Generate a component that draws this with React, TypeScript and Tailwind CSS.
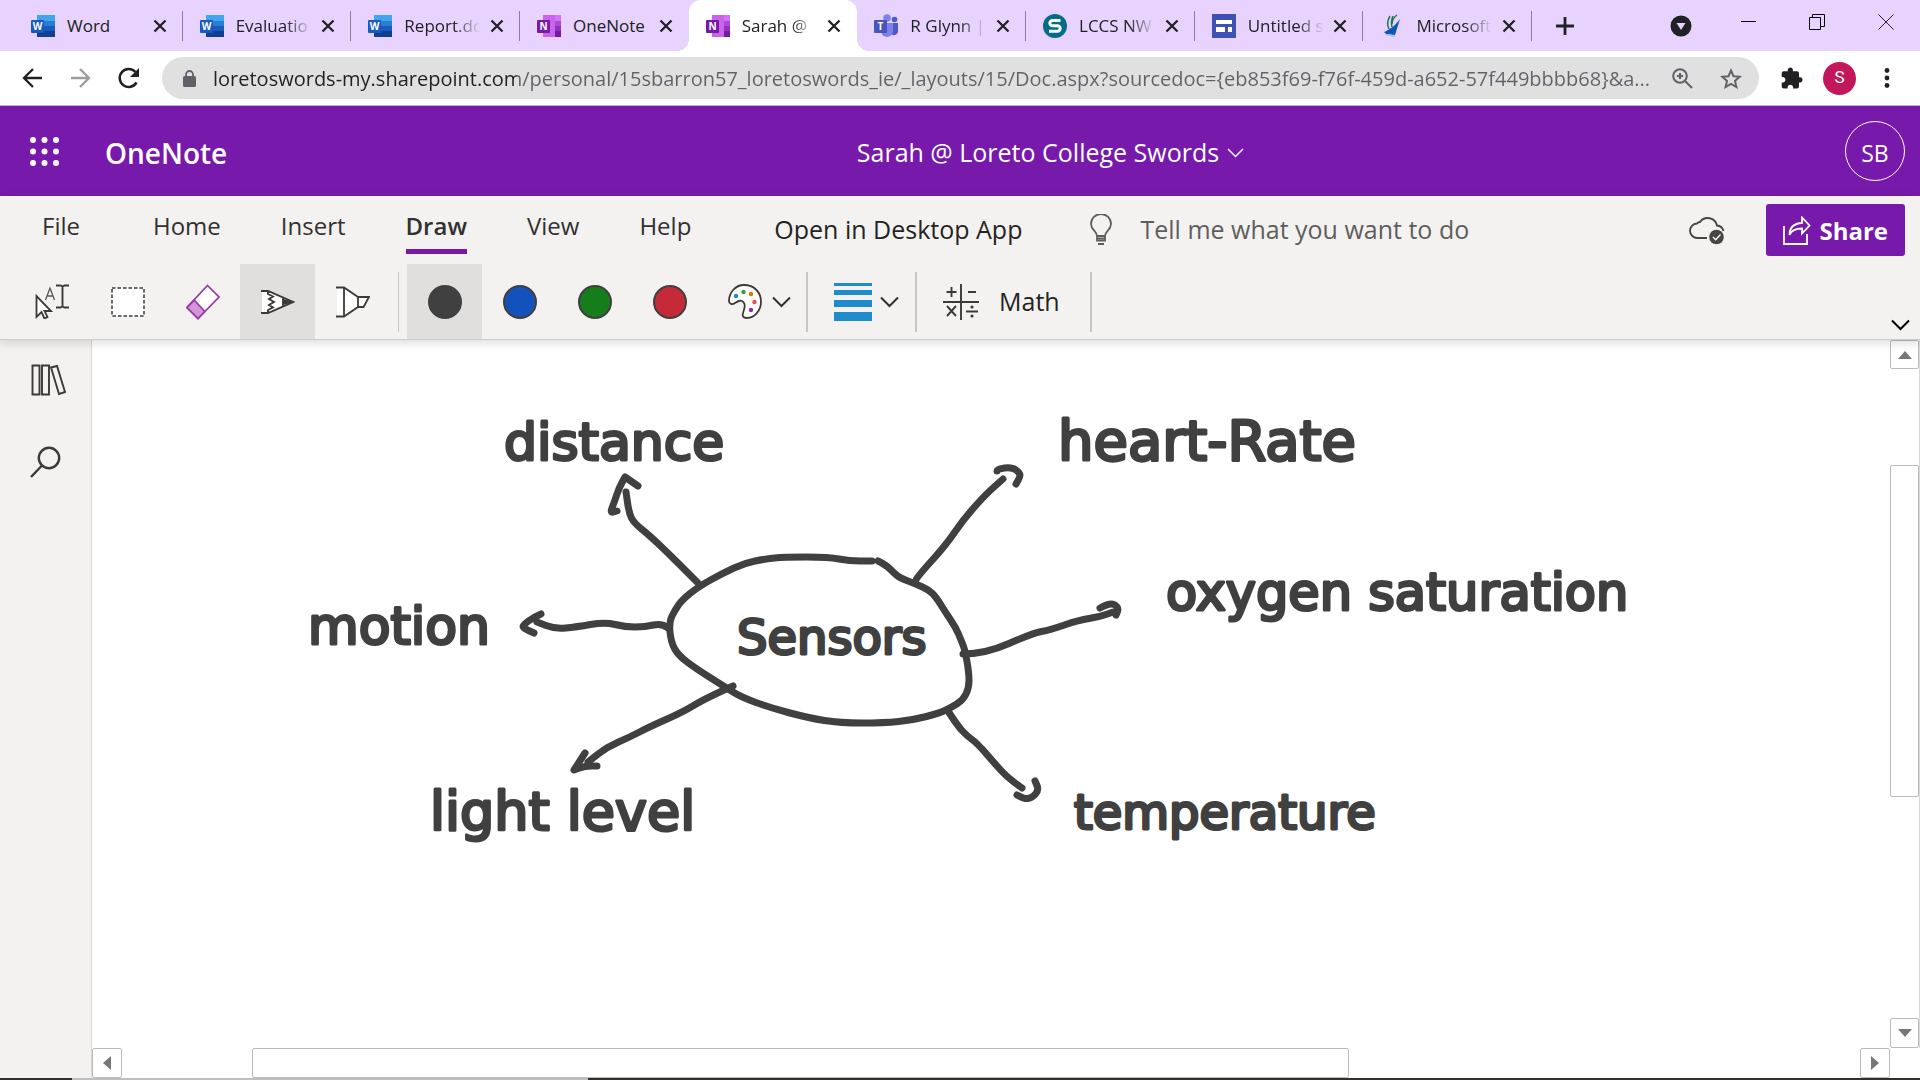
import React from "react";

type IconProps = { className?: string };

const WordIcon = () => (
  <svg width="24" height="24" viewBox="0 0 24 24" aria-hidden="true">
    <rect x="6" y="1" width="18" height="6" fill="#41a5ee" />
    <rect x="6" y="7" width="18" height="5" fill="#2b7cd3" />
    <rect x="6" y="12" width="18" height="5" fill="#185abd" />
    <rect x="6" y="17" width="18" height="6" fill="#103f91" />
    <rect x="0" y="6" width="13" height="13" rx="1" fill="#185abd" />
    <text x="6.5" y="16" textAnchor="middle" fontSize="10" fontWeight="700" fill="#fff" fontFamily="Open Sans, sans-serif">W</text>
  </svg>
);

const OneNoteIcon = () => (
  <svg width="24" height="24" viewBox="0 0 24 24" aria-hidden="true">
    <rect x="6" y="1" width="18" height="22" fill="#ca64ea" />
    <rect x="18" y="1" width="6" height="6" fill="#d373fc" />
    <rect x="18" y="7" width="6" height="5" fill="#ae4bd5" />
    <rect x="18" y="12" width="6" height="5" fill="#9332bf" />
    <rect x="18" y="17" width="6" height="6" fill="#7719aa" />
    <rect x="0" y="6" width="13" height="13" rx="1" fill="#7719aa" />
    <text x="6.5" y="16" textAnchor="middle" fontSize="10" fontWeight="700" fill="#fff" fontFamily="Open Sans, sans-serif">N</text>
  </svg>
);

const TeamsIcon = () => (
  <svg width="24" height="24" viewBox="0 0 24 24" aria-hidden="true">
    <circle cx="20.5" cy="5.5" r="2.8" fill="#5059c9" />
    <path d="M16 9h8v7a4 4 0 0 1-8 2z" fill="#5059c9" />
    <circle cx="13" cy="4" r="3.8" fill="#7b83eb" />
    <path d="M7 9h12v8a6 6 0 0 1-12 0z" fill="#7b83eb" />
    <rect x="0" y="6" width="13" height="13" rx="1" fill="#4b53bc" />
    <text x="6.5" y="16" textAnchor="middle" fontSize="10" fontWeight="700" fill="#fff" fontFamily="Open Sans, sans-serif">T</text>
  </svg>
);

const SwayIcon = () => (
  <svg width="24" height="24" viewBox="0 0 24 24" aria-hidden="true">
    <circle cx="12" cy="12" r="12" fill="#036c87" />
    <path d="M17.500 6.500H9.500a2.500 2.500 0 0 0 0 5.300h5a2.600 2.600 0 0 1 0 5.400H6" fill="none" stroke="#fff" strokeWidth="3" />
  </svg>
);

const SitesIcon = () => (
  <svg width="24" height="24" viewBox="0 0 24 24" aria-hidden="true">
    <rect width="24" height="24" fill="#3f51b5" />
    <path d="M4 6h16v4H4zM4 13h9v5H4zM16 13h4v5h-4z" fill="#fff" />
  </svg>
);

const SailIcon = () => (
  <svg width="18" height="24" viewBox="0 0 18 24" aria-hidden="true">
    <path d="M7 2c-3 5-3 9-1 13M10 2C8 6 8 9 9 13M14 1c-3 2-5 6-5 9" fill="none" stroke="#1d7a4f" strokeWidth="1.500" />
    <path d="M17 5l-5 16-9-1-2-2C6 16 12 12 17 5z" fill="#0f57b5" />
    <path d="M3 21c4-1 6 2 9 1" fill="none" stroke="#9cc4e6" strokeWidth="1.500" />
  </svg>
);

const CloseIcon = () => (
  <svg width="14" height="14" viewBox="0 0 14 14" aria-hidden="true">
    <path d="M1.500 1.500l11 11M12.500 1.500l-11 11" stroke="#202124" strokeWidth="2.300" />
  </svg>
);

const Chevron = ({ className }: IconProps) => (
  <svg width="19" height="12" viewBox="0 0 19 12" className={className} aria-hidden="true">
    <path d="M1 1.500l8.500 8.500L18 1.500" fill="none" stroke="currentColor" strokeWidth="2" />
  </svg>
);

const tabs = [
  { title: "Word", icon: <WordIcon /> },
  { title: "Evaluatio", icon: <WordIcon />, fade: true },
  { title: "Report.do", icon: <WordIcon />, fade: true },
  { title: "OneNote", icon: <OneNoteIcon /> },
  { title: "Sarah @", icon: <OneNoteIcon />, active: true, fade: true },
  { title: "R Glynn |", icon: <TeamsIcon />, fade: true },
  { title: "LCCS NW", icon: <SwayIcon />, fade: true },
  { title: "Untitled s", icon: <SitesIcon />, fade: true },
  { title: "Microsoft", icon: <SailIcon />, fade: true },
];

function TabStrip() {
  return (
    <div className="flex h-[51px] shrink-0 items-stretch bg-[#e8d3ff] pl-[14px]">
      <div className="flex min-w-0 flex-1" role="tablist">
        {tabs.map((t, i) => (
          <div
            key={i}
            className={
              t.active
                ? "relative flex min-w-0 flex-1 items-center rounded-t-xl bg-white pr-4 pl-[17px]"
                : "relative flex min-w-0 flex-1 items-center pr-4 pl-[17px]"
            }
          >
            <button role="tab" aria-selected={!!t.active} className="flex min-w-0 flex-1 items-center gap-3 text-[17px] text-[#202124]">
              <span className="flex w-6 shrink-0 justify-center">{t.icon}</span>
              <span
                className={
                  t.fade
                    ? "w-[76px] shrink-0 overflow-hidden text-left whitespace-nowrap [mask-image:linear-gradient(90deg,#000_65%,transparent)]"
                    : "w-[76px] shrink-0 text-left whitespace-nowrap"
                }
              >
                {t.title}
              </span>
            </button>
            <button aria-label={"Close " + t.title} className="flex w-[14px] shrink-0 justify-center">
              <CloseIcon />
            </button>
            {i !== 3 && i !== 4 && <span className="absolute top-[11px] right-0 h-[30px] w-px bg-[#8b7f9b]" />}
            {t.active && (
              <>
                <span className="absolute bottom-0 -left-3 size-3 bg-[radial-gradient(circle_at_0_0,transparent_12px,#fff_12px)]" />
                <span className="absolute -right-3 bottom-0 size-3 bg-[radial-gradient(circle_at_100%_0,transparent_12px,#fff_12px)]" />
              </>
            )}
          </div>
        ))}
      </div>
      <div className="flex w-[388px] shrink-0 items-center justify-between pr-[26px] pl-6">
        <button aria-label="New tab">
          <svg width="18" height="18" viewBox="0 0 18 18"><path d="M9 0v18M0 9h18" stroke="#202124" strokeWidth="2.800" /></svg>
        </button>
        <div className="flex items-center">
          <button aria-label="Search tabs" className="mr-[49px]">
            <svg width="22" height="22" viewBox="0 0 22 22"><circle cx="11" cy="11" r="10.500" fill="#202124" /><path d="M6.500 8h9L11 15z" fill="#e8d3ff" /></svg>
          </button>
          <div className="flex items-center gap-[53px] pb-2">
            <button aria-label="Minimize"><svg width="15" height="16" viewBox="0 0 15 16"><path d="M0 7.500h15" stroke="#000" /></svg></button>
            <button aria-label="Restore"><svg width="16" height="16" viewBox="0 0 16 16"><path d="M.5 3.500h11v12H.5zM3.500 3.500v-3h12v12h-4" fill="none" stroke="#000" /></svg></button>
            <button aria-label="Close window"><svg width="16" height="16" viewBox="0 0 16 16"><path d="M.5.5l15 15M15.500.5l-15 15" stroke="#222" /></svg></button>
          </div>
        </div>
      </div>
    </div>
  );
}

function AddressBar() {
  return (
    <div className="flex h-[55px] shrink-0 items-center border-b border-[#b9b3bd] bg-white">
      <div className="flex w-[162px] shrink-0 items-center gap-[27px] pl-[22px]">
        <button aria-label="Back"><svg width="21" height="20" viewBox="0 0 21 20"><path d="M20 10H2M11 1L2 10l9 9" fill="none" stroke="#202124" strokeWidth="2.300" /></svg></button>
        <button aria-label="Forward"><svg width="21" height="20" viewBox="0 0 21 20"><path d="M1 10h18M10 1l9 9-9 9" fill="none" stroke="#9c9ca0" strokeWidth="2.300" /></svg></button>
        <button aria-label="Reload"><svg width="22" height="22" viewBox="0 0 22 22"><path d="M18.500 15.500A9 9 0 1 1 17.500 5" fill="none" stroke="#202124" strokeWidth="2.500" /><path d="M21 1v9h-9z" fill="#202124" /></svg></button>
      </div>
      <label className="flex h-[42px] min-w-0 flex-1 items-center rounded-full bg-[#e0e0e0] pr-[17px] pl-[21px]">
        <svg width="13" height="17" viewBox="0 0 13 17" className="shrink-0" aria-hidden="true"><path d="M3 7V4.500a3.500 3.500 0 0 1 7 0V7" fill="none" stroke="#5f6368" strokeWidth="1.800" /><rect y="6" width="13" height="11" rx="1.500" fill="#5f6368" /></svg>
        <input
          aria-label="Address"
          className="ml-[17px] min-w-0 flex-1 bg-[linear-gradient(90deg,#202124_304px,#5f6368_304px)] bg-clip-text pt-[2px] text-[20px] text-transparent outline-none"
          defaultValue="loretoswords-my.sharepoint.com/personal/15sbarron57_loretoswords_ie/_layouts/15/Doc.aspx?sourcedoc={eb853f69-f76f-459d-a652-57f449bbbb68}&a..."
        />
        <button aria-label="Zoom" className="mr-[27px] shrink-0"><svg width="21" height="21" viewBox="0 0 21 21" fill="none" stroke="#5f6368" strokeWidth="2"><circle cx="8" cy="8" r="6.800" /><path d="M13 13l7 7M8 5v6M5 8h6" /></svg></button>
        <button aria-label="Bookmark" className="shrink-0"><svg width="22" height="21" viewBox="0 0 22 21"><path d="M11 2.500l2.500 5.700 6.200.6-4.700 4.100 1.400 6.100L11 15.800 5.600 19 7 12.900 2.300 8.800l6.200-.6z" fill="none" stroke="#5f6368" strokeWidth="2" /></svg></button>
      </label>
      <div className="flex shrink-0 items-center pr-[30px] pl-[22px]">
        <button aria-label="Extensions"><svg width="22" height="22" viewBox="0 0 22 22"><path d="M19.500 10.300H18V6.200a2 2 0 0 0-2-2h-4.100V2.600a2.600 2.600 0 0 0-5.100 0v1.600H2.700a2 2 0 0 0-2 2V10h1.500a2.800 2.800 0 0 1 0 5.500H.7v3.900a2 2 0 0 0 2 2h3.900v-1.500a2.800 2.800 0 0 1 5.500 0v1.500H16a2 2 0 0 0 2-2v-4h1.500a2.600 2.600 0 0 0 0-5.100z" fill="#202124" /></svg></button>
        <button className="ml-5 flex size-[33px] items-center justify-center rounded-full bg-[#c2185b] font-[Roboto] text-[17px] text-white">S</button>
        <button aria-label="Menu" className="ml-7"><svg width="6" height="20" viewBox="0 0 6 20" fill="#202124"><circle cx="3" cy="2.500" r="2.400" /><circle cx="3" cy="10" r="2.400" /><circle cx="3" cy="17.500" r="2.400" /></svg></button>
      </div>
    </div>
  );
}

function AppHeader() {
  return (
    <header className="flex h-[90px] shrink-0 items-center bg-[#7719aa] text-white">
      <div className="flex flex-1 items-center gap-[46px] pl-[30px]">
        <button aria-label="App launcher">
          <svg width="29" height="29" viewBox="0 0 29 29" fill="#fff">
            {[3, 14.5, 26].map((y) => [3, 14.5, 26].map((x) => <circle key={x + "-" + y} cx={x} cy={y} r="3" />))}
          </svg>
        </button>
        <h1 className="pt-1 text-[28px] font-semibold">OneNote</h1>
      </div>
      <button className="flex items-center gap-2 pt-1 pl-[166px] text-[25px]">
        Sarah @ Loreto College Swords
        <svg width="17" height="10" viewBox="0 0 17 10" aria-hidden="true"><path d="M1 1l7.500 7.500L16 1" fill="none" stroke="#fff" strokeWidth="1.500" /></svg>
      </button>
      <div className="flex flex-1 justify-end pr-[15px]">
        <button className="flex size-[60px] items-center justify-center rounded-full border border-white pt-1 text-[23px]">SB</button>
      </div>
    </header>
  );
}

const Divider = () => <span className="h-[60px] w-[2px] shrink-0 bg-[#c8c6c4]" />;

const swatches = [
  { name: "Black", cls: "bg-[#404040]", selected: true },
  { name: "Blue", cls: "bg-[#1352bd]" },
  { name: "Green", cls: "bg-[#167d1b]" },
  { name: "Red", cls: "bg-[#c62a38]" },
];

function Ribbon() {
  return (
    <div className="relative z-10 shrink-0 border-b border-[#cfcdcb] bg-[#f3f2f1] text-[#323130] shadow-[0_3px_10px_rgba(0,0,0,0.14)]">
      <div className="flex h-[68px] items-center pr-[15px] pl-[42px] text-[24px]">
        <nav className="flex items-center gap-[60px] pb-2">
          <button className="mr-[13px]">File</button>
          <button>Home</button>
          <button>Insert</button>
          <button className="relative font-semibold">
            Draw
            <span className="absolute inset-x-0 -bottom-[10px] h-[5px] bg-[#7719aa]" />
          </button>
          <button>View</button>
          <button>Help</button>
        </nav>
        <button className="ml-[83px] text-[25px] text-[#252423]">Open in Desktop App</button>
        <label className="ml-[68px] flex min-w-0 flex-1 items-center gap-[28px] text-[25px]">
          <svg width="22" height="32" viewBox="0 0 22 32" fill="none" stroke="#605e5c" strokeWidth="1.800" className="shrink-0" aria-hidden="true">
            <path d="M7 22c0-5-6-6-6-12a10 10 0 0 1 20 0c0 6-6 7-6 12zM7 22v4.500h8V22M7 24.300h8M8 30h6" />
          </svg>
          <input aria-label="Tell me what you want to do" placeholder="Tell me what you want to do" className="min-w-0 flex-1 bg-transparent outline-none placeholder:text-[#605e5c]" />
        </label>
        <button aria-label="Saved" className="mr-[41px] shrink-0">
          <svg width="36" height="30" viewBox="0 0 36 30" aria-hidden="true">
            <path d="M18 23H8.500A7 7 0 0 1 8 8.500a4 4 0 0 1 3-1.500 9.500 9.500 0 0 1 17 3.500 7.500 7.500 0 0 1 6.500 5.500" fill="none" stroke="#484644" strokeWidth="1.900" />
            <circle cx="27.500" cy="22" r="7.300" fill="#484644" />
            <path d="M24 22l2.700 2.800 4.800-5.300" fill="none" stroke="#fff" strokeWidth="1.300" />
          </svg>
        </button>
        <button className="flex h-[52px] shrink-0 items-center gap-2 rounded-[3px] bg-[#7719aa] px-[17px] pt-px font-bold text-white">
          <svg width="28" height="29" viewBox="0 0 28 29" fill="none" stroke="#fff" strokeWidth="1.800" aria-hidden="true">
            <path d="M1 10v18h23v-10M6.500 19c0-7 4-11.500 12.500-12V1.500l7.500 8-7.500 8v-5C13 12.500 8.500 14 6.500 19z" />
          </svg>
          Share
        </button>
      </div>

      <div className="flex items-center pr-[10px] pl-[15px]">
        <button aria-label="Select objects or type text" className="flex size-[75px] items-center justify-center">
          <svg width="35" height="35" viewBox="0 0 35 35" fill="none" aria-hidden="true">
            <path d="M1.500 12v21l5-5 3 6.500 3-1.500-3-6h6.500z" fill="#fff" stroke="#3b3a39" strokeWidth="1.800" />
            <path d="M10.500 16l4.500-12 4.500 12M12 12h6" stroke="#555" strokeWidth="1.300" />
            <path d="M21 1.500h4.500l2 1 2-1H34M21 23.500h4.500l2-1 2 1H34M27.500 2.500v20" stroke="#3b3a39" strokeWidth="1.900" />
          </svg>
        </button>
        <button aria-label="Lasso select" className="flex size-[75px] items-center justify-center">
          <svg width="34" height="30" viewBox="0 0 34 30" aria-hidden="true"><rect x="1" y="1" width="32" height="28" fill="#fff" stroke="#6b6967" strokeWidth="2" strokeDasharray="3.500 2" /></svg>
        </button>
        <button aria-label="Eraser" className="flex size-[75px] items-center justify-center">
          <svg width="34" height="36" viewBox="0 0 34 36" stroke="#963aa3" strokeWidth="1.700" aria-hidden="true">
            <path d="M21.500 1.500L33 13 12 34.500 1 23.500z" fill="#fff" />
            <path d="M8.300 16.200L1 23.500l11 11 6.800-7z" fill="#d493dc" />
          </svg>
        </button>
        <button aria-label="Pen" className="flex size-[75px] items-center justify-center bg-[#e1dfdd]">
          <svg width="34" height="26" viewBox="0 0 34 26" fill="none" stroke="#3b3a39" strokeWidth="1.900" aria-hidden="true">
            <path d="M1 2h6l25 11L7 24H1z" fill="#fff" stroke="none" />
            <path d="M0 2h7l25 11L7 24H0M7 2v3l5 2.500-4 2.500 5 3-5 3 4 2.500L7 21v3M22 9.500v7" />
            <path d="M22 10l11 3-11 3z" fill="#3b3a39" stroke="none" />
          </svg>
        </button>
        <button aria-label="Highlighter" className="flex size-[75px] items-center justify-center">
          <svg width="34" height="32" viewBox="0 0 34 32" fill="none" stroke="#3b3a39" strokeWidth="1.800" aria-hidden="true">
            <path d="M1 1.500h7l14 9.500h11l-5.500 10H22L8 30.500H1z" fill="#fff" stroke="none" />
            <path d="M0 1.500h8l14 9.500v10L8 30.500H0M8 1.500v29M22 11h11l-5.500 10H22" />
          </svg>
        </button>
        <span className="mx-2 h-[60px] w-px shrink-0 bg-[#c8c6c4]" />
        {swatches.map((s) => (
          <button key={s.name} aria-label={s.name} className={s.selected ? "flex size-[75px] items-center justify-center bg-[#e1dfdd]" : "flex size-[75px] items-center justify-center"}>
            <span className={"size-[34px] rounded-full border-2 border-[#404040] " + s.cls} />
          </button>
        ))}
        <button aria-label="More colors" className="flex h-[75px] w-[99px] items-center gap-[10px] pl-[21px]">
          <svg width="34" height="35" viewBox="0 0 34 35" aria-hidden="true">
            <path d="M16 1c10 0 17 7 17 17 0 9-7 16-14 16-4 0-5-2-4-5 1-4 3-7 1-10-2-4-6-2-9 0-3 2-6 1-6-2C1 9 7 1 16 1z" fill="#fff" stroke="#3b3a39" strokeWidth="1.800" />
            <circle cx="8" cy="12" r="2.200" fill="#1e8bcd" /><circle cx="15.500" cy="8" r="2.200" fill="#2f9e44" /><circle cx="23" cy="10" r="2.200" fill="#e07000" /><circle cx="26.500" cy="18" r="2.200" fill="#ef4b4b" /><circle cx="23" cy="26" r="2.200" fill="#8a2da5" />
          </svg>
          <Chevron />
        </button>
        <Divider />
        <button aria-label="Line thickness" className="flex h-[75px] w-[107px] items-center gap-2 pl-[26px]">
          <svg width="38" height="38" viewBox="0 0 38 38" fill="#1e8bcd" aria-hidden="true"><path d="M0 0h38v3H0zM0 7h38v5H0zM0 17h38v7H0zM0 29h38v9H0z" /></svg>
          <Chevron />
        </button>
        <Divider />
        <button className="flex h-[75px] w-[173px] items-center gap-5 pl-[26px] text-[25px] text-[#252423]">
          <svg width="36" height="36" viewBox="0 0 36 36" fill="none" stroke="#3b3a39" strokeWidth="1.900" aria-hidden="true">
            <path d="M18 0v36M0 18h36M8.500 3v10M3.500 8h10M25 8h8M4 22l9 10M13 22L4 32M23 27.500h12" />
            <circle cx="29" cy="23" r="1.600" fill="#3b3a39" stroke="none" /><circle cx="29" cy="32" r="1.600" fill="#3b3a39" stroke="none" />
          </svg>
          Math
        </button>
        <Divider />
        <button aria-label="Collapse ribbon" className="mt-auto ml-auto mb-2 text-black"><Chevron /></button>
      </div>
    </div>
  );
}

const strokes: number[][][] = [
  [[878, 561], [886, 565], [894, 573], [900, 578], [916, 584], [929, 590], [936, 597], [946, 613], [956, 628], [961, 640], [965, 650], [969, 673], [969, 688], [963, 700], [952, 707], [940, 713], [913, 720], [884, 723], [840, 723], [809, 718], [771, 708], [741, 697], [725, 687], [695, 668], [678, 655], [671, 642], [669, 622], [675, 610], [682, 600], [698, 587], [723, 573], [745, 563], [765, 559], [784, 557], [829, 557], [849, 561], [872, 561]],
  [[698, 583], [690, 575], [668, 553], [649, 535], [634, 523], [629, 513], [626, 492]],
  [[638, 486], [625, 477], [625, 477], [619, 488], [614, 503], [610, 513], [617, 511]],
  [[668, 628], [662, 623], [645, 627], [625, 627], [605, 622], [576, 627], [555, 629], [537, 622]],
  [[541, 614], [534, 617], [523, 625], [523, 628], [534, 633]],
  [[916, 580], [917, 577], [946, 545], [963, 520], [985, 495], [1003, 479]],
  [[997, 471], [997, 469], [1012, 467], [1020, 473], [1020, 477], [1016, 484]],
  [[963, 654], [985, 654], [1033, 633], [1050, 630], [1079, 620], [1099, 617], [1113, 612]],
  [[1100, 608], [1111, 602], [1119, 608], [1116, 615]],
  [[948, 711], [957, 725], [967, 736], [977, 743], [996, 765], [1007, 777], [1022, 788]],
  [[1017, 795], [1024, 799], [1032, 798], [1039, 790], [1035, 781]],
  [[733, 686], [706, 698], [683, 712], [649, 727], [630, 737], [607, 747], [588, 762]],
  [[585, 753], [574, 770], [574, 770], [585, 766], [597, 766]],
];

/** Joins the pen samples with quadratic curves through their midpoints. */
function inkPath(points: number[][]) {
  let d = "M" + points[0].join(" ");
  for (let i = 1; i < points.length - 1; i++) {
    const [x, y] = points[i];
    const [nx, ny] = points[i + 1];
    d += ` Q${x} ${y} ${(x + nx) / 2} ${(y + ny) / 2}`;
  }
  return d + " L" + points[points.length - 1].join(" ");
}

const notes = [
  { text: "distance", x: 504, y: 460, size: "text-[52px]" },
  { text: "heart-Rate", x: 1058, y: 460, size: "text-[56px]" },
  { text: "motion", x: 308, y: 644, size: "text-[52px]" },
  { text: "Sensors", x: 737, y: 654, size: "text-[48px]" },
  { text: "oxygen saturation", x: 1166, y: 610, size: "text-[51px]" },
  { text: "light level", x: 430, y: 830, size: "text-[54px]" },
  { text: "temperature", x: 1074, y: 829, size: "text-[48px]" },
];

function InkPage() {
  return (
    <svg viewBox="92 340 1798 708" preserveAspectRatio="xMinYMin meet" className="h-full w-full" role="img" aria-label="Sensors mind map">
      <g fill="none" stroke="#404040" strokeWidth="7" strokeLinecap="round" strokeLinejoin="round">
        {strokes.map((p, i) => <path key={i} d={inkPath(p)} />)}
      </g>
      <g fill="#404040" stroke="#404040" strokeWidth="3" strokeLinejoin="round" className="font-['DejaVu_Sans',sans-serif]">
        {notes.map((n) => <text key={n.text} x={n.x} y={n.y} className={n.size}>{n.text}</text>)}
      </g>
    </svg>
  );
}

const arrowBtn = "flex shrink-0 items-center justify-center rounded-[2px] border border-[#b9bbbe] bg-white";

function Workspace() {
  return (
    <div className="flex min-h-0 flex-1">
      <aside className="flex w-[92px] shrink-0 flex-col items-start gap-[50px] border-r border-[#dad8d6] bg-[#f3f2f1] pt-[24px] pl-[30px]">
        <button aria-label="Navigation">
          <svg width="36" height="32" viewBox="0 0 36 32" fill="none" stroke="#3b3a39" strokeWidth="1.900" aria-hidden="true">
            <path d="M2.500 1.500h7v29h-7zM12 1.500h7v29h-7zM21 3.500l6-1.500 8 26-6 2z" />
          </svg>
        </button>
        <button aria-label="Search">
          <svg width="31" height="32" viewBox="0 0 31 32" fill="none" stroke="#3b3a39" strokeWidth="2.400" aria-hidden="true">
            <circle cx="19" cy="12" r="10.200" /><path d="M12 19.500L1 31" />
          </svg>
        </button>
      </aside>
      <main className="flex min-w-0 flex-1 flex-col bg-white">
        <div className="flex min-h-0 flex-1">
          <div className="min-w-0 flex-1"><InkPage /></div>
          <div className="flex w-[30px] shrink-0 flex-col border-r border-[#dad8d6]">
            <button aria-label="Scroll up" className={arrowBtn + " h-[29px]"}><svg width="14" height="8" viewBox="0 0 14 8"><path d="M0 8l7-8 7 8z" fill="#777" /></svg></button>
            <div className="flex-[96]" />
            <div className="flex-[331] rounded-[2px] border border-[#b9bbbe] bg-white" />
            <div className="flex-[222]" />
            <button aria-label="Scroll down" className={arrowBtn + " h-[30px]"}><svg width="14" height="8" viewBox="0 0 14 8"><path d="M0 0l7 8 7-8z" fill="#777" /></svg></button>
          </div>
        </div>
        <div className="flex h-[30px] shrink-0 pr-[30px]">
          <button aria-label="Scroll left" className={arrowBtn + " w-[30px]"}><svg width="8" height="14" viewBox="0 0 8 14"><path d="M8 0L0 7l8 7z" fill="#777" /></svg></button>
          <div className="flex-[130]" />
          <div className="flex-[1096] rounded-[2px] border border-[#b9bbbe] bg-white" />
          <div className="flex-[512]" />
          <button aria-label="Scroll right" className={arrowBtn + " w-[30px]"}><svg width="8" height="14" viewBox="0 0 8 14"><path d="M0 0l8 7-8 7z" fill="#777" /></svg></button>
        </div>
      </main>
    </div>
  );
}

export default function App() {
  return (
    <div className="flex h-screen flex-col overflow-hidden bg-white font-['Open_Sans',sans-serif]">
      <TabStrip />
      <AddressBar />
      <AppHeader />
      <Ribbon />
      <Workspace />
      <div className="flex h-[2px] shrink-0 bg-[#322f2f]">
        <span className="ml-[72px] w-[516px] bg-[#bfbfbf]" />
      </div>
    </div>
  );
}
